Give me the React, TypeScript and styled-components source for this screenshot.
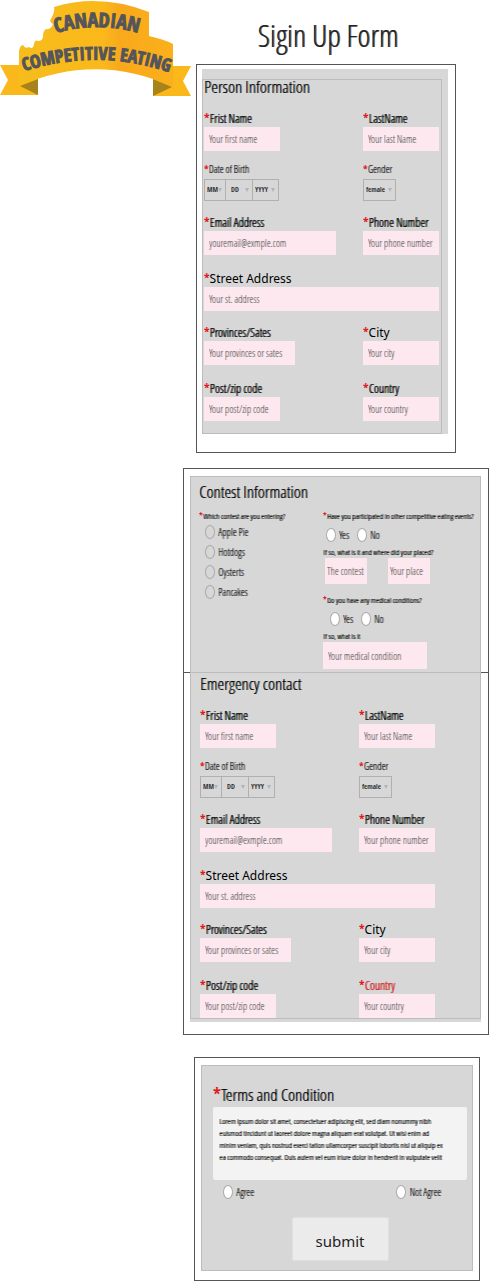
import React, { useId } from "react";
import styled, { createGlobalStyle, css } from "styled-components";

const light = `"Open Sans Condensed Light", "Open Sans", sans-serif`;
const bold = `"Open Sans Condensed", "Open Sans", sans-serif`;
const wide = `"Noto Sans", "Open Sans", sans-serif`;

const thicken = css`
  text-shadow: 1px 0 0 rgba(0, 0, 0, 0.6);
`;

const GlobalStyle = createGlobalStyle`
  *, *::before, *::after { box-sizing: border-box; }
  body { margin: 0; background: #fff; color: #111; font-family: ${light}; }
  input, select, button { font-family: inherit; margin: 0; }
`;

const Page = styled.div`
  display: flex;
  flex-direction: column;
`;

const Header = styled.header`
  display: flex;
  align-items: flex-start;
  height: 64px;
`;

const LogoArt = styled.svg`
  flex: none;
  width: 191px;
  height: 97px;
`;

const PageTitle = styled.h1`
  flex: 1;
  margin: 0 24px 0 0;
  font-size: 31px;
  font-weight: 400;
  line-height: 70px;
  text-align: center;
  white-space: nowrap;
  color: #222;
  ${thicken}
`;

const Form = styled.form`
  display: flex;
  flex-direction: column;
  margin-left: 183px;
`;

const Frame = styled.section<{ $left?: number; $right?: number; $top?: number; $pad: string }>`
  margin: ${(p) => p.$top ?? 0}px ${(p) => p.$right ?? 0}px 0 ${(p) => p.$left ?? 0}px;
  padding: ${(p) => p.$pad};
  border: 1px solid #555;
`;

const JoinedFrame = styled(Frame)`
  border-top: 0;
`;

const Shade = styled.div<{ $pad: string }>`
  padding: ${(p) => p.$pad};
  background: #d7d7d7;
`;

const Outline = styled.div<{ $pad: string }>`
  padding: ${(p) => p.$pad};
  border: 1px solid #bcbcbc;
  background: #d7d7d7;
`;

const OverlapOutline = styled(Outline)`
  margin-bottom: -1px;
`;

const OpenOutline = styled(Outline)`
  border-top: 0;
`;

const Heading = styled.h2`
  margin: 0;
  font-size: 17px;
  font-weight: 400;
  line-height: 14px;
  white-space: nowrap;
  color: #000;
  ${thicken}
`;

const FieldRow = styled.div<{ $gap: number }>`
  display: flex;
  justify-content: space-between;
  margin-top: ${(p) => p.$gap}px;
`;

const FieldBox = styled.div<{ $width?: string }>`
  display: flex;
  flex-direction: column;
  width: ${(p) => p.$width ?? "76px"};
`;

const labelShadow = (p: { $small?: boolean; $wide?: boolean; $alert?: boolean }) => {
  if (p.$wide) return "none";
  if (p.$alert) return "1px 0 0 #d0251f";
  return p.$small ? "1px 0 0 rgba(0, 0, 0, 0.5)" : "1px 0 0 #000";
};

const FieldLabel = styled.label<{ $small?: boolean; $wide?: boolean; $alert?: boolean }>`
  height: 16px;
  font-family: ${(p) => (p.$wide ? wide : light)};
  font-size: ${(p) => (p.$small ? 10 : 12)}px;
  line-height: 16px;
  white-space: nowrap;
  color: ${(p) => (p.$alert ? "#d0251f" : "#000")};
  text-shadow: ${labelShadow};
`;

const Star = styled.span`
  color: #e0191c;
  text-shadow: none;
  font-family: ${bold};
`;

const TextInput = styled.input`
  width: 100%;
  height: 24px;
  padding: 0 5px;
  border: 0;
  border-radius: 0;
  background: #fee8ef;
  font-size: 10px;
  color: #333;
  &::placeholder {
    color: #555;
    opacity: 1;
    text-shadow: 1px 0 0 rgba(80, 80, 80, 0.3);
  }
`;

const SelectGroup = styled.div`
  display: flex;
  height: 24px;
  padding: 2px 0 0;
`;

const SelectCell = styled.div<{ $width: number }>`
  display: grid;
  align-items: center;
  width: ${(p) => p.$width}px;
  height: 22px;
  border: 1px solid #b0b0b0;
  & + & { border-left: 0; }
  &::after {
    content: "";
    grid-area: 1 / 1;
    justify-self: end;
    margin-right: 3px;
    border: 2px solid transparent;
    border-top: 4px solid #b4b4b4;
    border-bottom: 0;
    pointer-events: none;
  }
`;

const Select = styled.select<{ $inset: number }>`
  grid-area: 1 / 1;
  width: 100%;
  height: 20px;
  padding: 0 0 2px ${(p) => p.$inset}px;
  border: 0;
  appearance: none;
  background: transparent;
  font-family: ${bold};
  font-size: 7px;
  font-weight: 700;
  color: #333;
`;

const Columns = styled.div`
  display: grid;
  grid-template-columns: 124px 1fr;
  margin-top: 11px;
`;

const Group = styled.fieldset`
  min-width: 0;
  margin: 0;
  padding: 0;
  border: 0;
`;

const finePrint = css`
  font-size: 8px;
  font-weight: 400;
  line-height: 12px;
  white-space: nowrap;
  color: #000;
  text-shadow: 1px 0 0 #000;
`;

const Question = styled.legend`
  padding: 0;
  ${finePrint}
`;

const SubQuestion = styled.label`
  display: block;
  ${finePrint}
`;

const ContestList = styled.div`
  display: flex;
  flex-direction: column;
  gap: 6px;
  padding: 3px 6px;
`;

const Choices = styled.div<{ $pad: string; $spread?: boolean }>`
  display: flex;
  justify-content: ${(p) => (p.$spread ? "space-between" : "flex-start")};
  gap: 8px;
  padding: ${(p) => p.$pad};
`;

const Choice = styled.label`
  display: flex;
  align-items: center;
  gap: 3px;
  height: 14px;
  font-size: 10px;
  line-height: 14px;
  white-space: nowrap;
  color: #111;
  ${thicken}
`;

const Radio = styled.input<{ $clear?: boolean }>`
  flex: none;
  appearance: none;
  width: 10px;
  height: 14px;
  border: 1px solid #aaa;
  border-radius: 50%;
  background: ${(p) => (p.$clear ? "transparent" : "#fff")};
  &:checked { background: #777; }
`;

const InputPair = styled.div`
  display: grid;
  grid-template-columns: 42px 42px;
  column-gap: 21px;
  margin-bottom: 10px;
  padding-left: 2px;
`;

const MedicalInput = styled(TextInput)`
  display: block;
  width: 104px;
  height: 27px;
`;

const ContestInput = styled(TextInput)`
  height: 26px;
  padding: 0 2px;
`;

const TermsText = styled.p`
  margin: 5px 0;
  height: 73px;
  padding: 8px 6px;
  border-radius: 2px;
  background: #f3f3f3;
  ${finePrint}
`;

const SubmitButton = styled.button`
  display: block;
  width: 97px;
  height: 44px;
  margin: 18px auto 0;
  padding: 4px 0 0;
  border: 1px solid #e0e0e0;
  border-radius: 2px;
  background: #ebebeb;
  font-family: ${wide};
  font-size: 15px;
  color: #222;
`;

function Logo() {
  return (
    <LogoArt viewBox="0 0 191 97" role="img" aria-label="Canadian Competitive Eating">
      <defs>
        <linearGradient id="ribbon" x1="0" x2="1" y1="0" y2="0">
          <stop offset="0" stopColor="#f6bd1b" />
          <stop offset="0.55" stopColor="#fbb81b" />
          <stop offset="0.65" stopColor="#f9a91c" />
          <stop offset="1" stopColor="#fbb01b" />
        </linearGradient>
        <path id="upper" d="M56 33 Q97 21 138 33" />
        <path id="lower" d="M22 72 Q97 47 171 73" />
      </defs>
      <path d="M0 65H38V95H0L8 80Z" fill="#fbb81b" />
      <path d="M191 66H153V96H191L183 81Z" fill="#fbb81b" />
      <path d="M20 86L38 79V95Z" fill="#a8831c" />
      <path d="M172 87L153 79V96Z" fill="#a8831c" />
      <path
        d="M54 7Q100-7 149 12V36Q163 39 173 44V87Q97 52 19 86V51Q20 45 23 45Q25 49 29 47Q33 50 34 44Q35 39 38 41Q43 41 43 36Q43 31 46 29Q51 30 53 24Q48 22 52 17Q55 12 54 7Z"
        fill="url(#ribbon)"
      />
      <g fill="#54555b" stroke="#54555b" strokeWidth="1" fontWeight="700" fontFamily={bold} textAnchor="middle">
        <text fontSize="20"><textPath href="#upper" startOffset="50%">CANADIAN</textPath></text>
        <text fontSize="18"><textPath href="#lower" startOffset="50%">COMPETITIVE EATING</textPath></text>
      </g>
    </LogoArt>
  );
}

type FieldProps = { label: string; hint: string; width?: string; wideLabel?: boolean; alert?: boolean };

function Field({ label, hint, width, wideLabel, alert }: FieldProps) {
  const id = useId();
  return (
    <FieldBox $width={width}>
      <FieldLabel htmlFor={id} $wide={wideLabel} $alert={alert}><Star>*</Star>{label}</FieldLabel>
      <TextInput id={id} placeholder={hint} />
    </FieldBox>
  );
}

type SelectBoxProps = { value: string; width: number; inset?: number; id?: string; label?: string };

function SelectBox({ value, width, inset = 2, id, label }: SelectBoxProps) {
  return (
    <SelectCell $width={width}>
      <Select id={id} aria-label={label} $inset={inset}><option>{value}</option></Select>
    </SelectCell>
  );
}

function PersonFields({ countryAlert }: { countryAlert?: boolean }) {
  const id = useId();
  return (
    <>
      <FieldRow $gap={17}>
        <Field label="Frist Name" hint="Your first name" />
        <Field label="LastName" hint="Your last Name" />
      </FieldRow>
      <FieldRow $gap={10}>
        <FieldBox>
          <FieldLabel htmlFor={id + "mm"} $small><Star>*</Star>Date of Birth</FieldLabel>
          <SelectGroup>
            <SelectBox id={id + "mm"} value="MM" width={22} />
            <SelectBox label="Day" value="DD" width={27} inset={5} />
            <SelectBox label="Year" value="YYYY" width={26} />
          </SelectGroup>
        </FieldBox>
        <FieldBox>
          <FieldLabel htmlFor={id + "g"} $small><Star>*</Star>Gender</FieldLabel>
          <SelectGroup><SelectBox id={id + "g"} value="female" width={33} /></SelectGroup>
        </FieldBox>
      </FieldRow>
      <FieldRow $gap={14}>
        <Field label="Email Address" hint="youremail@exmple.com" width="56%" />
        <Field label="Phone Number" hint="Your phone number" />
      </FieldRow>
      <FieldRow $gap={16}>
        <Field label="Street Address" hint="Your st. address" width="100%" wideLabel />
      </FieldRow>
      <FieldRow $gap={14}>
        <Field label="Provinces/Sates" hint="Your provinces or sates" width="91px" />
        <Field label="City" hint="Your city" wideLabel />
      </FieldRow>
      <FieldRow $gap={16}>
        <Field label="Post/zip code" hint="Your post/zip code" />
        <Field label="Country" hint="Your country" alert={countryAlert} />
      </FieldRow>
    </>
  );
}

function Option({ name, text, clear }: { name: string; text: string; clear?: boolean }) {
  return (
    <Choice><Radio type="radio" name={name} $clear={clear} />{text}</Choice>
  );
}

export default function App() {
  return (
    <>
      <GlobalStyle />
      <Page>
        <Header>
          <Logo />
          <PageTitle>Sigin Up Form</PageTitle>
        </Header>
        <Form onSubmit={(e) => e.preventDefault()}>
          <Frame $left={13} $right={33} $pad="4px 7px 18px 5px">
            <Shade $pad="10px 6px 0 0">
              <Outline $pad="0 2px 12px 1px">
                <Heading>Person Information</Heading>
                <PersonFields />
              </Outline>
            </Shade>
          </Frame>

          <Frame $top={15} $pad="7px 7px 0 6px">
            <OverlapOutline $pad="8px 8px 3px 8px">
              <Heading>Contest Information</Heading>
              <Columns>
                <Group>
                  <Question><Star>*</Star>Which contest are you entering?</Question>
                  <ContestList>
                    <Option name="contest" text="Apple Pie" clear />
                    <Option name="contest" text="Hotdogs" clear />
                    <Option name="contest" text="Oysterts" clear />
                    <Option name="contest" text="Pancakes" clear />
                  </ContestList>
                </Group>
                <div>
                  <Group>
                    <Question><Star>*</Star>Have you participated in other competitive eating events?</Question>
                    <Choices $pad="6px 3px 4px"><Option name="events" text="Yes" /><Option name="events" text="No" /></Choices>
                    <SubQuestion htmlFor="event-name">If so, what is it and where did your placed?</SubQuestion>
                    <InputPair>
                      <ContestInput id="event-name" placeholder="The contest" />
                      <ContestInput aria-label="Your place" placeholder="Your place" />
                    </InputPair>
                  </Group>
                  <Group>
                    <Question><Star>*</Star>Do you have any medical conditions?</Question>
                    <Choices $pad="6px 7px 4px"><Option name="medical" text="Yes" /><Option name="medical" text="No" /></Choices>
                    <SubQuestion htmlFor="medical-name">If so, what is it</SubQuestion>
                    <MedicalInput id="medical-name" placeholder="Your medical condition" />
                  </Group>
                </div>
              </Columns>
            </OverlapOutline>
          </Frame>

          <JoinedFrame $pad="0 7px 12px 6px">
            <Shade $pad="0 0 3px">
              <OpenOutline $pad="4px 45px 0 9px">
                <Heading>Emergency contact</Heading>
                <PersonFields countryAlert />
              </OpenOutline>
            </Shade>
          </JoinedFrame>

          <Frame $left={11} $right={9} $top={22} $pad="7px 6px 9px">
            <Outline $pad="22px 5px 9px 11px">
              <Heading><Star>*</Star>Terms and Condition</Heading>
              <TermsText>
                Lorem ipsum dolor sit amet, consectetuer adipiscing elit, sed diam nonummy nibh<br />
                euismod tincidunt ut laoreet dolore magna aliquam erat volutpat. Ut wisi enim ad<br />
                minim veniam, quis nostrud exerci tation ullamcorper suscipit lobortis nisl ut aliquip ex<br />
                ea commodo consequat. Duis autem vel eum iriure dolor in hendrerit in vulputate velit
              </TermsText>
              <Choices $pad="0 26px 0 10px" $spread>
                <Option name="terms" text="Agree" />
                <Option name="terms" text="Not Agree" />
              </Choices>
              <SubmitButton type="submit">submit</SubmitButton>
            </Outline>
          </Frame>
        </Form>
      </Page>
    </>
  );
}
